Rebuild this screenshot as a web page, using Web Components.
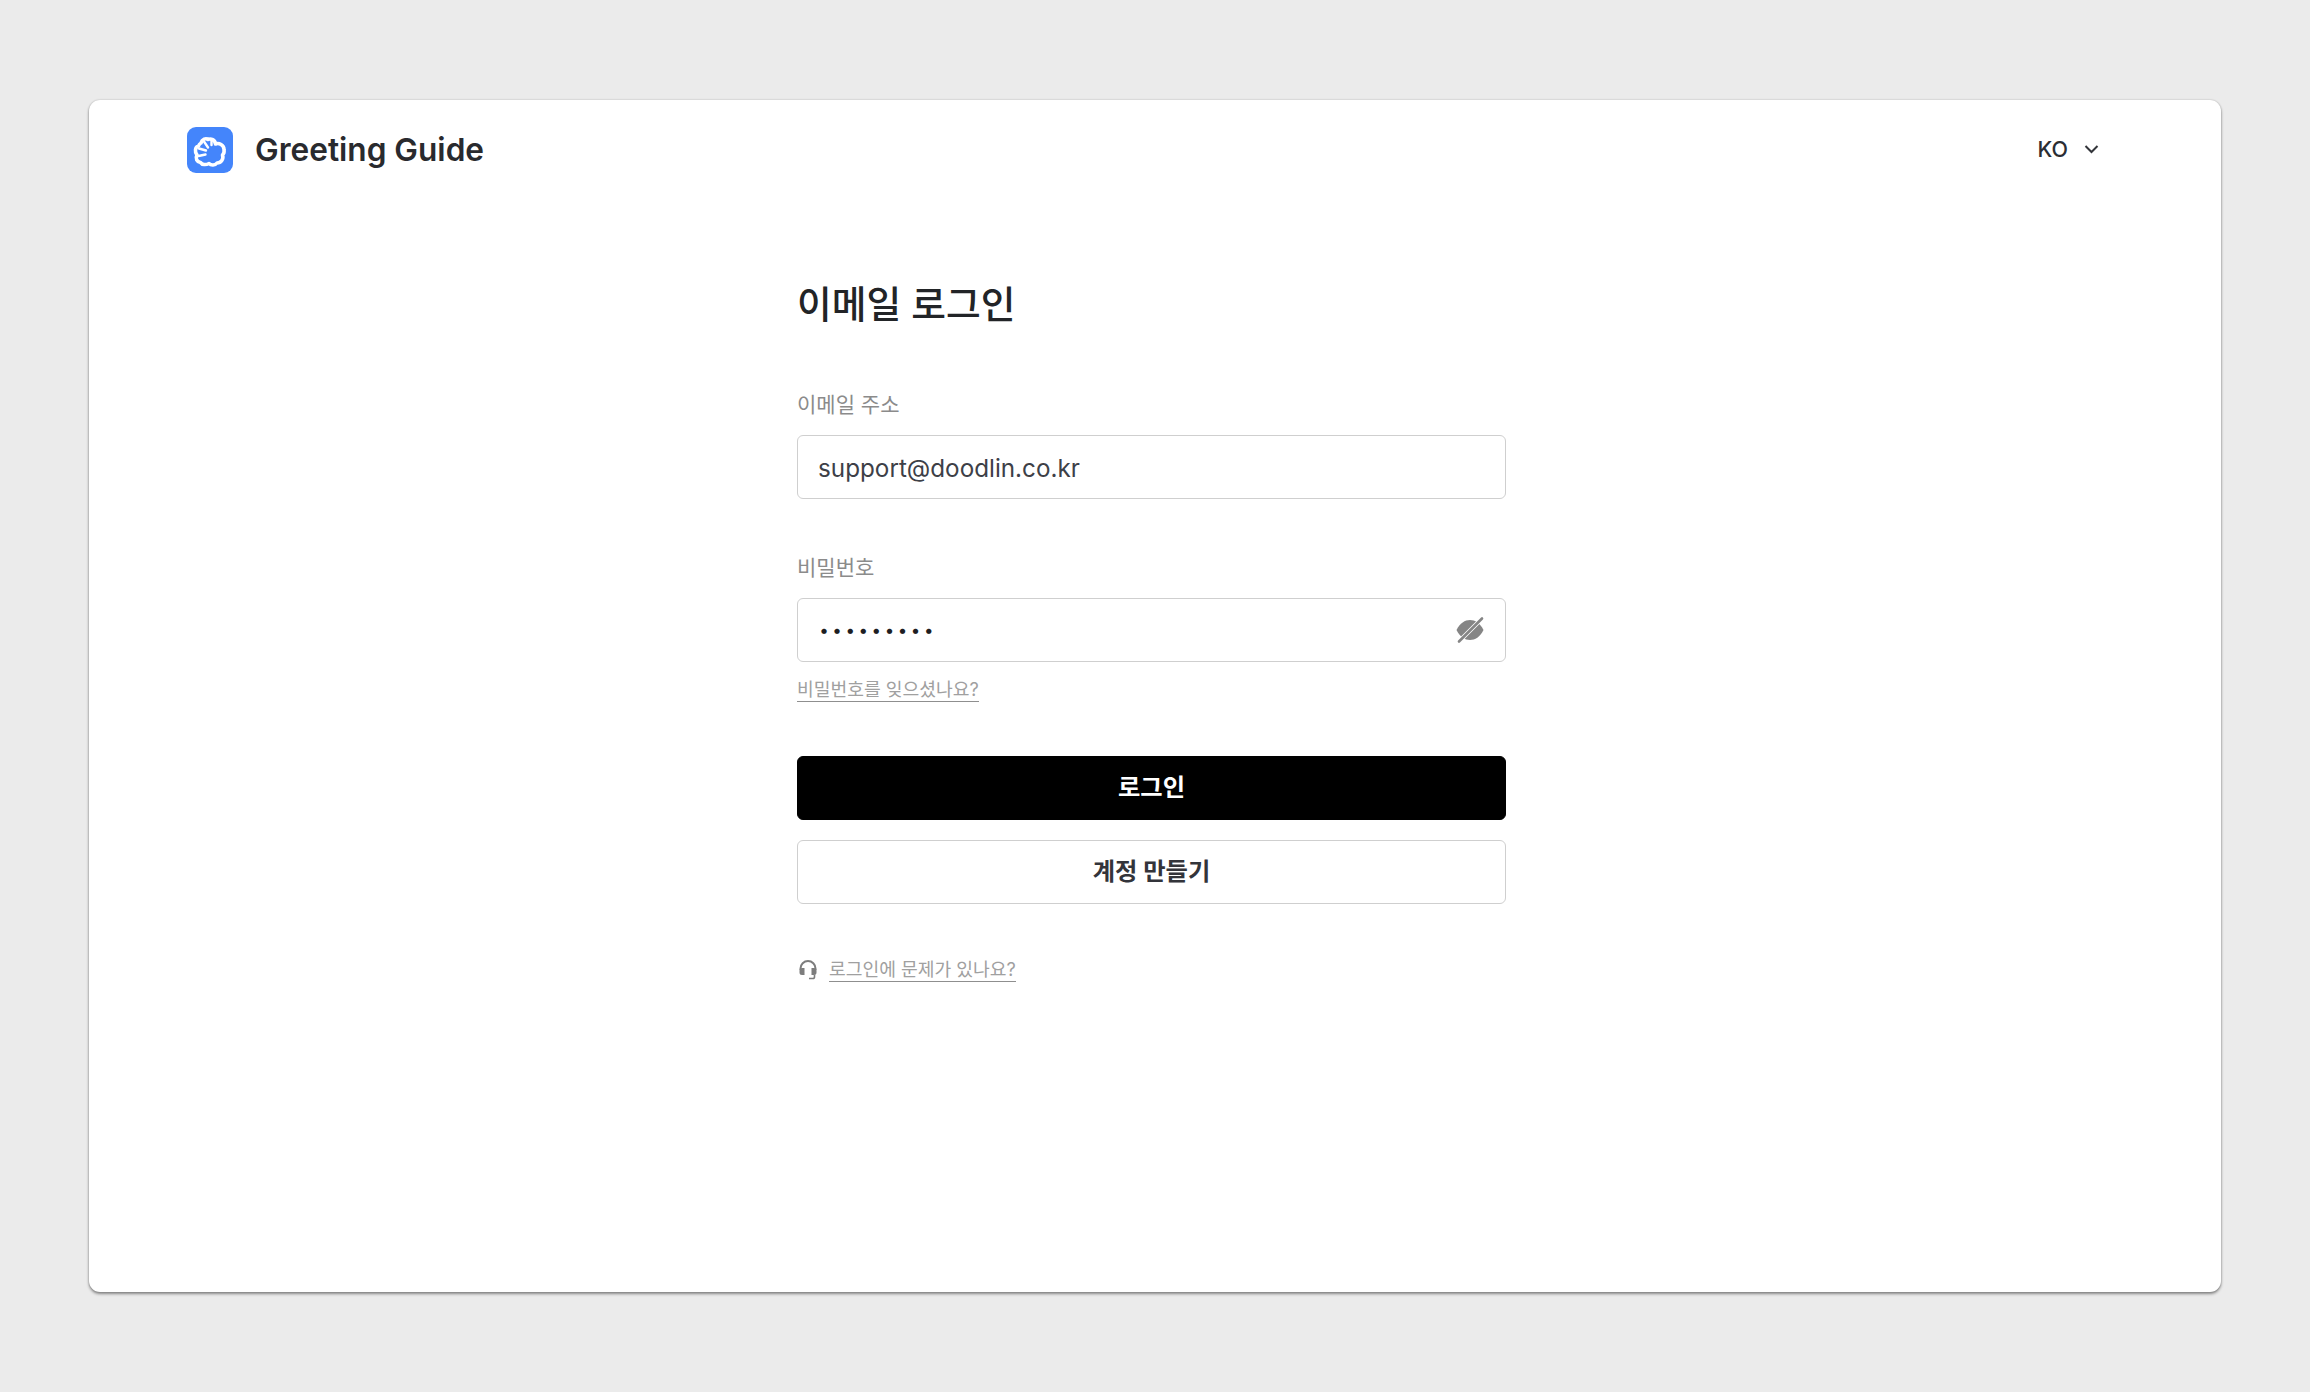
<!DOCTYPE html>
<html lang="ko"><head><meta charset="utf-8"><title>이메일 로그인</title>
<style>
html,body{margin:0;padding:0;background:#ebebeb;height:100%}
body{font-family:Inter,"Noto Sans CJK KR",sans-serif;box-sizing:border-box;width:2310px;height:1392px;padding:100px 89px 100px 89px;overflow:hidden}
</style></head><body>
<gg-card>
  <gg-header></gg-header>
  <gg-login></gg-login>
</gg-card>
<script>
const FONT='Inter,"Noto Sans CJK KR",sans-serif';
class Base extends HTMLElement{
  constructor(){super();this.attachShadow({mode:'open'}).innerHTML=this.constructor.html}
}
class GgCard extends Base{static html=`<style>
:host{display:flex;flex-direction:column;box-sizing:border-box;width:2132px;height:1192px;background:#fff;border-radius:11px;box-shadow:0 2px 3px rgba(0,0,0,.42),0 0 2px rgba(0,0,0,.22)}
</style><slot></slot>`}
class GgHeader extends Base{static html=`<style>
:host{display:flex;align-items:center;justify-content:space-between;height:50px;padding:25px 122px 0 98px;color:#222}
.brand{display:flex;align-items:center;gap:22px;font:600 31.600px/46px ${FONT};color:#292a2e}
.lang{display:flex;align-items:center;gap:16px;font:500 21.500px/30px ${FONT};color:#2b2d33;margin-bottom:3px}
svg{display:block}
</style>
<div class="brand"><svg width="46" height="46" viewBox="0 0 46 46"><rect width="46" height="46" rx="9" fill="#4485fb"/><path d="M14 16C15 12 19 11 21 12.500C24 11 28 13 28.500 17C32 15.500 37 18 37 22.500C37.500 25 36.500 27 35.500 28C37 32 34 36 30 36C28 38.500 24 38.500 22 36.500C19 38 15 38 13.500 35.500C10 35 8 31.500 10 28C7.500 25 8 20 11.500 19C12 17.500 13 16.500 14 16z" fill="#4485fb" stroke="#fff" stroke-width="3.600" stroke-linejoin="round"/><path d="M12 21.500 19 23.500M11.500 29 18.500 27.500M17 14.500 21 20.500M24.500 13.500 24.500 18" fill="none" stroke="#fff" stroke-width="2.400" stroke-linecap="round"/></svg><span>Greeting Guide</span></div>
<div class="lang"><span>KO</span><svg width="15" height="10" viewBox="0 0 15 10"><path d="M1.500 2l6 6 6-6" fill="none" stroke="#33353a" stroke-width="2"/></svg></div>`}
class GgField extends Base{static html=`<style>
:host{display:block}
label{display:block;font:400 21px/30px ${FONT};color:#8b8b8b;margin-bottom:15px}
.box{box-sizing:border-box;height:64px;border:1.500px solid #cfcfcf;border-radius:6px;display:flex;align-items:center;justify-content:space-between;padding:0 21px 0 20px;font:400 24.250px/30px ${FONT};color:#3d4047}
.val{padding-top:3px}
::slotted(svg){display:block}
</style><label></label><div class="box"><span class="val"><slot></slot></span><slot name="end"></slot></div>`;
  connectedCallback(){this.shadowRoot.querySelector('label').textContent=this.getAttribute('label')}
}
class GgButton extends Base{static html=`<style>
:host{display:flex;align-items:center;justify-content:center;box-sizing:border-box;height:64px;padding-bottom:2px;border-radius:6px;font:700 24.300px/30px ${FONT};border:1.500px solid #cfcfcf;color:#33343a;background:#fff}
:host([primary]){background:#000;border-color:#000;color:#fff}
</style><slot></slot>`}
class GgLogin extends Base{static html=`<style>
:host{display:flex;flex-direction:column;box-sizing:border-box;width:709px;margin:0 0 0 708px;padding-top:104px}
h1{margin:0 0 61px;font:500 37.750px/50px ${FONT};color:#222427;letter-spacing:0}
.pw{margin-top:54px}
.dots{display:block;margin:-3px 0 0 2px;letter-spacing:5.020px;font:700 17px/30px ${FONT};color:#1d1d22}
.forgot{align-self:flex-start;margin-top:16px;font:400 18.200px/23px ${FONT};color:#a0a0a0;border-bottom:1.500px solid #8f8f8f}
.b1{margin-top:53.500px}.b2{margin-top:20px}
.help{display:flex;align-items:center;gap:12px;margin-top:54.500px;margin-left:2px;font:400 18.200px/23px ${FONT};color:#a0a0a0}
.help span{border-bottom:1.500px solid #8f8f8f}
svg{display:block}
</style>
<h1>이메일 로그인</h1>
<gg-field label="이메일 주소">support@doodlin.co.kr</gg-field>
<gg-field class="pw" label="비밀번호"><span class="dots">•••••••••</span>
  <svg slot="end" width="28" height="28" viewBox="0 0 28 28"><path d="M.500 14C4 7 9 4 14 4C19 4 24 7 27.500 14C24 21 19 24 14 24C9 24 4 21 .500 14z" fill="#858585"/><path d="M27 1.500 1.500 27" stroke="#fff" stroke-width="4.200"/><path d="M26 2.500 3 25.500" stroke="#858585" stroke-width="2.600" stroke-linecap="round"/></svg></gg-field>
<span class="forgot">비밀번호를 잊으셨나요?</span>
<gg-button class="b1" primary>로그인</gg-button>
<gg-button class="b2">계정 만들기</gg-button>
<div class="help"><svg width="18" height="20" viewBox="0 0 18 20"><path d="M1.500 10V8.500a7.500 7.500 0 0 1 15 0V10" fill="none" stroke="#7d7d7d" stroke-width="2"/><path d="M.500 10.500a2.500 2.500 0 0 1 2.500-2.500h2.500v7H3a2.500 2.500 0 0 1-2.500-2.500zM17.500 10.500a2.500 2.500 0 0 0-2.500-2.500h-2.500v7H15a2.500 2.500 0 0 0 2.500-2.500z" fill="#7d7d7d"/><path d="M15.500 15v2a1.500 1.500 0 0 1-1.500 1.500h-4" fill="none" stroke="#7d7d7d" stroke-width="1.600"/></svg><span>로그인에 문제가 있나요?</span></div>`}
customElements.define('gg-card',GgCard);
customElements.define('gg-header',GgHeader);
customElements.define('gg-field',GgField);
customElements.define('gg-button',GgButton);
customElements.define('gg-login',GgLogin);
</script></body></html>
